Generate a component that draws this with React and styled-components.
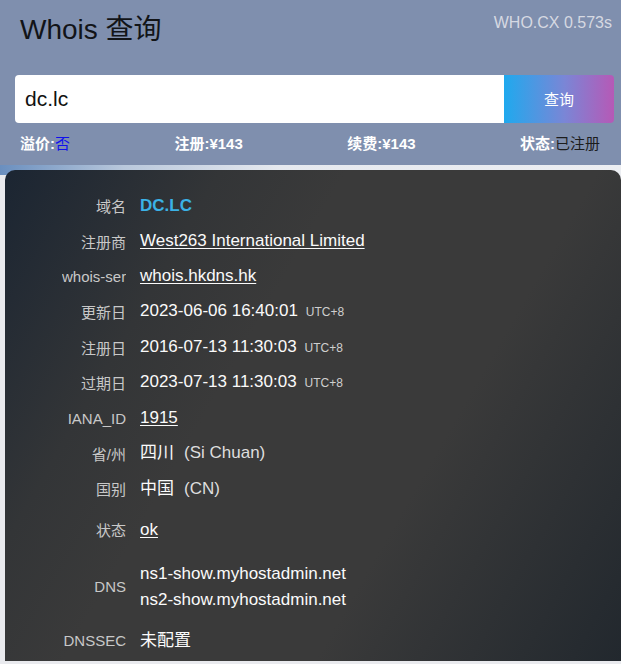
import React from "react";
import styled, { createGlobalStyle } from "styled-components";

const Global = createGlobalStyle`
  html, body { margin: 0; padding: 0; }
  body {
    font-family: "Liberation Sans", Arial, "Noto Sans CJK SC", sans-serif;
    background:
      linear-gradient(to right, #6a8fbf 0%, #b9c8dc 20%, #e6e9ef 45%, #eceef2 100%) top left / 100% 175px no-repeat,
      #e9eaee;
    min-height: 664px;
    overflow: hidden;
  }
`;

const Page = styled.div`
  width: 621px;
  min-height: 664px;
`;

const Header = styled.header`
  background: #7f8fae;
  padding: 14px 7px 0 15px;
  height: 151px;
`;

const TopBar = styled.div`
  display: flex;
  justify-content: space-between;
  align-items: flex-start;
`;

const Title = styled.h1`
  margin: 0 0 0 5px;
  font-size: 28px;
  line-height: 32px;
  font-weight: normal;
  color: #121418;
`;

const Meta = styled.div`
  font-size: 16px;
  line-height: 18px;
  color: #d6d9e2;
  margin-right: 2px;
`;

const SearchBar = styled.form`
  display: flex;
  margin-top: 29px;
  height: 48px;
`;

const Input = styled.input`
  flex: 1;
  border: none;
  outline: none;
  border-radius: 4px 0 0 4px;
  background: #fff;
  padding: 0 10px;
  font-family: inherit;
  font-size: 21px;
  color: #111;
`;

const Button = styled.button`
  width: 110px;
  border: none;
  border-radius: 0 4px 4px 0;
  background: linear-gradient(to right, #1fa9ee 0%, #7a86d6 55%, #b659b6 100%);
  color: #fff;
  font-family: inherit;
  font-size: 15px;
  padding-bottom: 2px;
`;

const Stats = styled.div`
  display: flex;
  justify-content: space-between;
  padding: 0 14px 0 5px;
  margin-top: 12px;
  font-size: 15px;
  line-height: 18px;
`;

const Stat = styled.div`
  font-weight: bold;
  color: #fff;
`;

const StatValue = styled.span`
  color: ${(p) => p.$color};
  font-weight: ${(p) => (p.$bold ? "bold" : "normal")};
`;

const Card = styled.section`
  margin: 5px 0 0 5px;
  border-radius: 10px 10px 0 0;
  background: linear-gradient(120deg, #1b2532 0%, #333537 24%, #3a3a3a 38%, #3a3a3a 66%, #22282e 100%);
  padding: 18px 0 0 57px;
  min-height: 477px;
  box-sizing: border-box;
`;

const Row = styled.div`
  display: grid;
  grid-template-columns: 64px 1fr;
  column-gap: 14px;
  align-items: center;
  height: ${(p) => p.$h}px;
`;

const Label = styled.div`
  font-size: 15px;
  color: #c8c8c8;
  text-align: right;
  white-space: nowrap;
  overflow: hidden;
`;

const Value = styled.div`
  font-size: 17px;
  color: #fafafa;
  line-height: 26px;
`;

const Domain = styled.span`
  color: #3bb2e6;
  font-weight: bold;
`;

const Link = styled.a`
  color: #fafafa;
  text-decoration: underline;
  text-underline-offset: 2px;
`;

const Zone = styled.span`
  font-size: 12px;
  color: #cfcfcf;
  margin-left: 8px;
`;

const Aside = styled.span`
  margin-left: 10px;
  color: #dedede;
`;

const rows = [
  { label: "域名", h: 35.4, value: <Domain>DC.LC</Domain> },
  { label: "注册商", h: 35.4, value: <Link>West263 International Limited</Link> },
  { label: "whois-ser", h: 35.4, value: <Link>whois.hkdns.hk</Link> },
  { label: "更新日", h: 35.4, value: <>2023-06-06 16:40:01<Zone>UTC+8</Zone></> },
  { label: "注册日", h: 35.4, value: <>2016-07-13 11:30:03<Zone>UTC+8</Zone></> },
  { label: "过期日", h: 35.4, value: <>2023-07-13 11:30:03<Zone>UTC+8</Zone></> },
  { label: "IANA_ID", h: 35.4, value: <Link>1915</Link> },
  { label: "省/州", h: 35.4, value: <>四川<Aside>(Si Chuan)</Aside></> },
  { label: "国别", h: 35.4, value: <>中国<Aside>(CN)</Aside></> },
  { label: "状态", h: 46.6, value: <Link>ok</Link> },
  {
    label: "DNS",
    h: 67.4,
    value: (
      <>
        <div>ns1-show.myhostadmin.net</div>
        <div>ns2-show.myhostadmin.net</div>
      </>
    ),
  },
  { label: "DNSSEC", h: 40.6, value: <>未配置</> },
];

export default function App() {
  return (
    <Page>
      <Global />
      <Header>
        <TopBar>
          <Title>Whois 查询</Title>
          <Meta>WHO.CX 0.573s</Meta>
        </TopBar>
        <SearchBar onSubmit={(e) => e.preventDefault()}>
          <Input defaultValue="dc.lc" />
          <Button type="submit">查询</Button>
        </SearchBar>
        <Stats>
          <Stat>
            溢价:<StatValue $color="#1010ee">否</StatValue>
          </Stat>
          <Stat>注册:¥143</Stat>
          <Stat>续费:¥143</Stat>
          <Stat>
            状态:<StatValue $color="#1c1c1c">已注册</StatValue>
          </Stat>
        </Stats>
      </Header>
      <Card>
        {rows.map((r) => (
          <Row key={r.label} $h={r.h}>
            <Label>{r.label}</Label>
            <Value>{r.value}</Value>
          </Row>
        ))}
      </Card>
    </Page>
  );
}
